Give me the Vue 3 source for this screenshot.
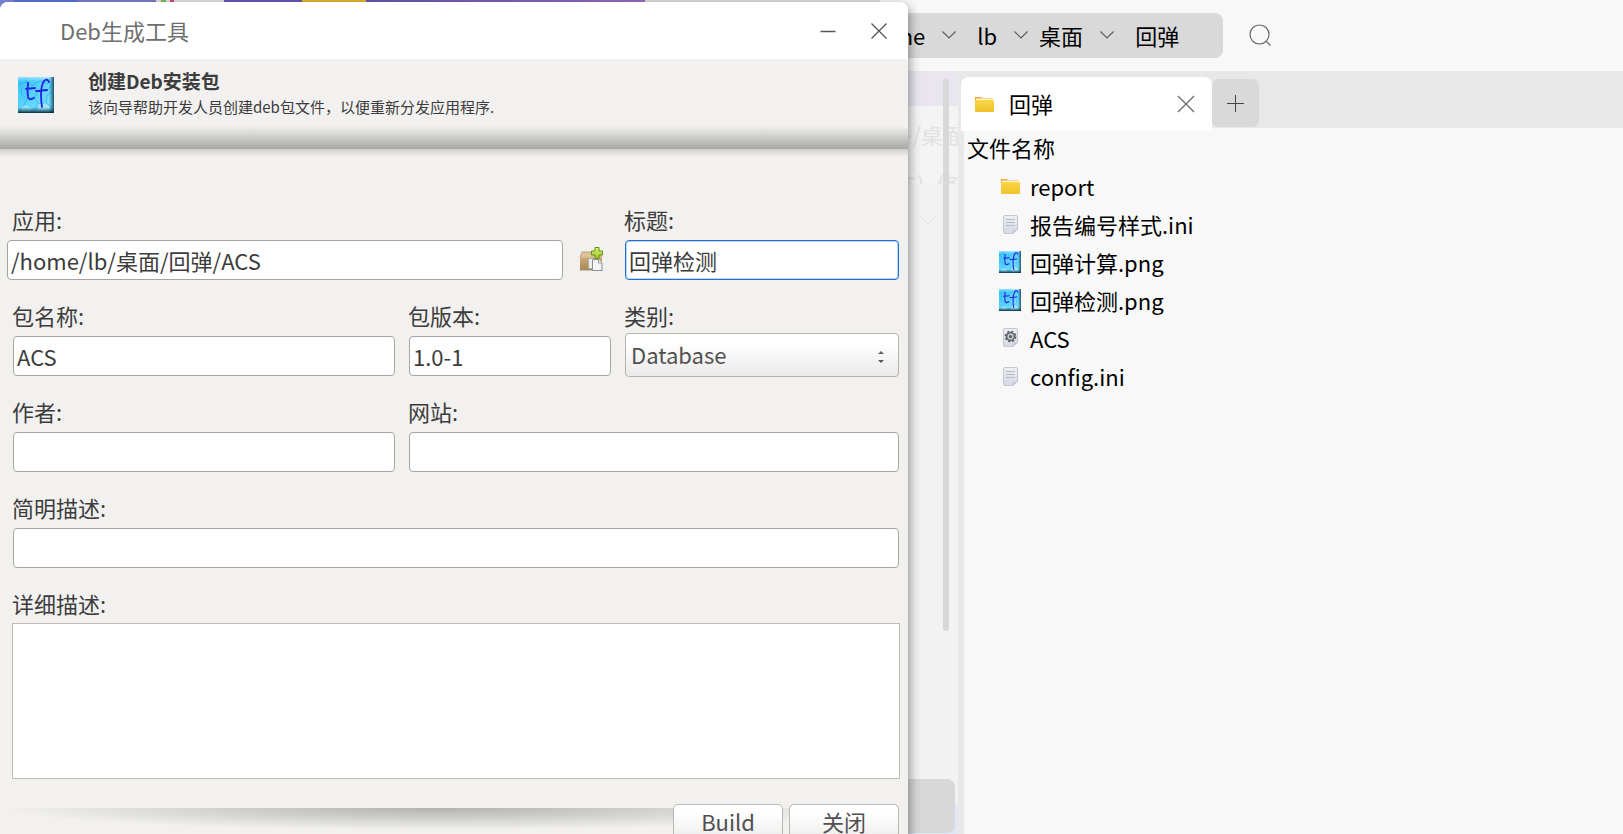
<script setup>
import { reactive } from 'vue'

const form = reactive({
  app: '/home/lb/桌面/回弹/ACS',
  title: '回弹检测',
  name: 'ACS',
  version: '1.0-1',
  category: 'Database',
  author: '',
  website: '',
  summary: '',
  description: ''
})

const categories = ['Database', 'Development', 'Education', 'Graphics', 'Network', 'Office', 'Utility']
const crumbs = [
  { name: 'home' },
  { name: 'lb', spaced: true },
  { name: '桌面' },
  { name: '回弹', spaced: true }
]
const files = [
  { name: 'report', icon: 'folder' },
  { name: '报告编号样式.ini', icon: 'doc' },
  { name: '回弹计算.png', icon: 'tf' },
  { name: '回弹检测.png', icon: 'tf' },
  { name: 'ACS', icon: 'exec' },
  { name: 'config.ini', icon: 'doc' }
]
</script>

<template>
  <svg class="defs" width="0" height="0" aria-hidden="true">
    <defs>
      <linearGradient id="g-folder" x1="0" y1="0" x2="0" y2="1">
        <stop offset="0" stop-color="#f9d648" /><stop offset="1" stop-color="#f0c22c" />
      </linearGradient>
      <linearGradient id="g-doc" x1="0" y1="0" x2="0" y2="1">
        <stop offset="0" stop-color="#eeeff3" /><stop offset="1" stop-color="#d6d9e4" />
      </linearGradient>
      <linearGradient id="g-tf" x1="0" y1="0" x2="1" y2="1">
        <stop offset="0" stop-color="#35c3fb" /><stop offset="0.5" stop-color="#5ed3fd" /><stop offset="1" stop-color="#8be4fb" />
      </linearGradient>
      <linearGradient id="g-edge-b" x1="0" y1="0" x2="0" y2="1">
        <stop offset="0.84" stop-color="#0a4a66" stop-opacity="0" /><stop offset="1" stop-color="#06202f" stop-opacity="0.95" />
      </linearGradient>
      <linearGradient id="g-edge-r" x1="0" y1="0" x2="1" y2="0">
        <stop offset="0.86" stop-color="#0a4a66" stop-opacity="0" /><stop offset="1" stop-color="#0a3c52" stop-opacity="0.85" />
      </linearGradient>
      <linearGradient id="g-edge-t" x1="0" y1="0" x2="0" y2="1">
        <stop offset="0" stop-color="#fff" stop-opacity="0.5" /><stop offset="0.12" stop-color="#fff" stop-opacity="0" />
      </linearGradient>
      <linearGradient id="g-box" x1="0" y1="0" x2="0" y2="1">
        <stop offset="0" stop-color="#cfae7f" /><stop offset="1" stop-color="#a98652" />
      </linearGradient>
      <linearGradient id="g-plus" x1="0" y1="0" x2="0" y2="1">
        <stop offset="0" stop-color="#e6f27c" /><stop offset="1" stop-color="#9cc31e" />
      </linearGradient>
      <symbol id="i-folder" viewBox="0 0 22 22">
        <path d="M2 4h6l1 1h11v5H2z" fill="#f2a52a" />
        <path d="M3 5.500h17V9H3z" fill="#fdf6dc" />
        <path d="M2 7.700q0-.7.8-.7h17.400q.8 0 .8.800v10.200q0 1-1 1H3q-1 0-1-1z" fill="url(#g-folder)" />
      </symbol>
      <symbol id="i-doc" viewBox="0 0 22 22">
        <path d="M6 2.500h11q1.500 0 1.500 1.500v12.500l-4.500 4H6q-1.500 0-1.500-1.500V4q0-1.500 1.500-1.500z" fill="url(#g-doc)" stroke="#c3c6ce" />
        <path d="M14 20.500v-2.500q0-1.500 1.500-1.500h3z" fill="#c5c8d3" />
        <path d="M7 6.500h9M7 9.500h9M7 12.500h9" stroke="#b6bac6" />
      </symbol>
      <symbol id="i-exec" viewBox="0 0 22 22">
        <path d="M6 1.500h11q1.500 0 1.500 1.500v12.500l-4.500 4H6q-1.500 0-1.500-1.500V3q0-1.500 1.500-1.500z" fill="url(#g-doc)" stroke="#c3c6ce" />
        <path d="M14 19.500v-2.500q0-1.500 1.500-1.500h3z" fill="#c5c8d3" />
        <circle cx="11.500" cy="9.500" r="5" fill="none" stroke="#5b5d61" stroke-width="1.600" stroke-dasharray="2.200 1.727" />
        <circle cx="11.500" cy="9.500" r="3.900" fill="#c4c6cb" stroke="#5b5d61" stroke-width="1.400" />
        <circle cx="11.500" cy="9.500" r="1.500" fill="#55575b" />
      </symbol>
      <symbol id="i-tf" viewBox="0 0 36 36">
        <path d="M0 0h36v36H0z" fill="url(#g-tf)" />
        <path d="M0 8l8-3 6 4 8-5 8 3M8 5V0M4 8l-1 9 6 5 8-2 3 7 8-1 6 4M9 22l-4 8 5 5M17 20l3-7 9 1 4-5M20 27l-5 8M28 26l1-8 5-3" fill="none" stroke="#1ba5e6" stroke-opacity="0.550" />
        <path d="M20 27l8-1 4 4-3 4h-8zM3 30l5-2 6 4-3 3H4z" fill="#b5efff" fill-opacity="0.600" />
        <path d="M0 0h36v36H0z" fill="url(#g-edge-t)" />
        <path d="M0 0h36v36H0z" fill="url(#g-edge-r)" />
        <path d="M0 0h36v36H0z" fill="url(#g-edge-b)" />
        <path d="M10 6q-1 8 0 14 1 4 6 1M8 12l9-1M31 5q-2-4-5-1-3 5-3 13 0 7 1 13M18 14l11-1" fill="none" stroke="#2222e0" stroke-width="1.800" stroke-linecap="round" />
      </symbol>
    </defs>
  </svg>

  <div class="desktop">
    <div class="left">
      <form class="dialog" @submit.prevent>
        <header class="titlebar">
          <h1>Deb生成工具</h1>
          <button type="button" aria-label="Minimize">
            <svg width="18" height="18" viewBox="0 0 18 18"><path d="M1.500 9.500h15" stroke="#555" stroke-width="1.300" /></svg>
          </button>
          <button type="button" aria-label="Close">
            <svg width="18" height="18" viewBox="0 0 18 18"><path d="M1.500 1.500l15 15M16.500 1.500l-15 15" stroke="#555" stroke-width="1.300" /></svg>
          </button>
        </header>

        <section class="banner">
          <svg class="logo" width="36" height="36"><use href="#i-tf" /></svg>
          <div>
            <h2>创建Deb安装包</h2>
            <p>该向导帮助开发人员创建deb包文件，以便重新分发应用程序.</p>
          </div>
        </section>

        <section class="fields">
          <div class="field span2">
            <label for="app">应用:</label>
            <div class="picker">
              <input id="app" v-model="form.app" type="text" />
              <button type="button" aria-label="Browse">
                <svg width="24" height="24" viewBox="0 0 24 24">
                  <path d="M0 23.500h24" stroke="#000" stroke-opacity="0.180" />
                  <path d="M3 5h17l3 5H1z" fill="#dcc39b" stroke="#b7986a" stroke-width="0.800" />
                  <path d="M1 9h22v14H1z" fill="url(#g-box)" />
                  <path d="M2 10h20" stroke="#e1caa6" />
                  <path d="M9.500 11.500h6v10h-6z" fill="#eee" stroke="#aaa" />
                  <path d="M13.500 12.500h6l3.500 3.500v7.500h-9.500z" fill="#f4f4f4" stroke="#8f8f8f" />
                  <path d="M19.500 12.500V16H23" fill="#fff" stroke="#9a9a9a" />
                  <path d="M16 0.500h4v3.500h3.500v4H20v3.500h-4V8h-3.500V4H16z" fill="url(#g-plus)" stroke="#5f9215" />
                </svg>
              </button>
            </div>
          </div>
          <div class="field">
            <label for="title">标题:</label>
            <input id="title" v-model="form.title" class="active" type="text" />
          </div>

          <div class="field">
            <label for="name">包名称:</label>
            <input id="name" v-model="form.name" type="text" />
          </div>
          <div class="field">
            <label for="version">包版本:</label>
            <input id="version" v-model="form.version" type="text" />
          </div>
          <div class="field">
            <label for="category">类别:</label>
            <div class="combo">
              <select id="category" v-model="form.category">
                <option v-for="c in categories" :key="c">{{ c }}</option>
              </select>
              <svg width="8" height="14" viewBox="0 0 8 14" aria-hidden="true"><path d="M1 4l3-3 3 3zM1 10l3 3 3-3z" fill="#5c5c5c" /></svg>
            </div>
          </div>

          <div class="field">
            <label for="author">作者:</label>
            <input id="author" v-model="form.author" type="text" />
          </div>
          <div class="field span2">
            <label for="website">网站:</label>
            <input id="website" v-model="form.website" type="text" />
          </div>

          <div class="field span3">
            <label for="summary">简明描述:</label>
            <input id="summary" v-model="form.summary" type="text" />
          </div>

          <div class="field span3">
            <label for="description">详细描述:</label>
            <textarea id="description" v-model="form.description"></textarea>
          </div>
        </section>

        <footer class="actions">
          <button type="submit">Build</button>
          <button type="button">关闭</button>
        </footer>
      </form>
    </div>

    <div class="manager">
      <div class="toolbar">
        <nav class="crumbs" aria-label="Path">
          <template v-for="(c, i) in crumbs" :key="c.name">
            <svg v-if="i" width="14" height="8" viewBox="0 0 14 8" aria-hidden="true"><path d="M0.500 0.500l6.500 6.500 6.500-6.500" fill="none" stroke="#5c5c5c" stroke-width="1.200" /></svg>
            <a href="#" :class="{ spaced: c.spaced }">{{ c.name }}</a>
          </template>
        </nav>
        <button type="button" class="search" aria-label="Search">
          <svg width="22" height="22" viewBox="0 0 22 22"><circle cx="10.500" cy="10.500" r="9.500" fill="none" stroke="#6a6a6a" stroke-width="1.200" /><path d="M17.500 17.500l4 4" stroke="#6a6a6a" stroke-width="1.200" /></svg>
        </button>
      </div>

      <div class="body">
        <aside class="side">
          <div class="ghost tint"></div>
          <div class="ghost path">~/桌面</div>
          <div class="ghost cut"><span>S)</span><span>修</span></div>
          <svg class="ghost-chevron" width="14" height="8" viewBox="0 0 14 8" aria-hidden="true"><path d="M0.500 0.500l6.500 6.500 6.500-6.500" fill="none" stroke="#e0e0e0" /></svg>
          <div class="panel"></div>
          <div class="scroll"></div>
        </aside>

        <main class="content">
          <div class="tabs">
            <div class="tab">
              <svg width="22" height="22"><use href="#i-folder" /></svg>
              <span>回弹</span>
              <button type="button" aria-label="Close tab">
                <svg width="18" height="18" viewBox="0 0 18 18"><path d="M1 1l16 16M17 1L1 17" stroke="#666" stroke-width="1.200" /></svg>
              </button>
            </div>
            <button type="button" class="add" aria-label="New tab">
              <svg width="17" height="17" viewBox="0 0 17 17"><path d="M0 8.500h17M8.500 0v17" stroke="#444" /></svg>
            </button>
          </div>
          <div class="listing">
            <h3>文件名称</h3>
            <ul>
              <li v-for="f in files" :key="f.name">
                <svg width="22" height="22"><use :href="'#i-' + f.icon" /></svg>
                <span>{{ f.name }}</span>
              </li>
            </ul>
          </div>
        </main>
      </div>
    </div>
  </div>
</template>

<style>
body {
  margin: 0;
  overflow: hidden;
}
</style>

<style scoped>
.defs {
  position: absolute;
}
.desktop {
  display: flex;
  height: 100vh;
  overflow: hidden;
  background: #f8f8f8;
  font-family: "Noto Sans CJK SC", "Noto Sans", sans-serif;
  font-size: 22px;
}
.desktop * {
  box-sizing: border-box;
}
button,
input,
select,
textarea {
  margin: 0;
  font: inherit;
  color: inherit;
}
h1,
h2,
h3,
p,
ul {
  margin: 0;
  padding: 0;
}
button {
  display: flex;
  align-items: center;
  justify-content: center;
  padding: 0;
  border: 0;
  background: none;
}
svg {
  display: block;
  flex: none;
}

/* package builder window */
.left {
  flex: 908 1 0;
  min-width: 0;
  position: relative;
  z-index: 1;
  padding-top: 2px;
  background: linear-gradient(90deg, #7b86dc 0 14px, #5573dc 14px 77px, #7c7cd0 77px 156px, #e6e6e6 156px 161px, #7fbf50 161px 166px, #e6e6e6 166px 170px, #d04a80 170px 174px, #e6e6e6 174px 224px, #6659bd 224px 302px, #e6b730 302px 366px, #6657b4 366px, #9a6cc2 645px, #e0e0e0 645px 880px, #f8f8f8 880px) top / 100% 12px no-repeat;
}
.dialog {
  border-radius: 8px 8px 0 0;
  overflow: hidden;
  background: #f2f1f0;
  color: #3c3c3c;
  box-shadow: 1px 4px 12px rgba(0, 0, 0, 0.45);
}
.titlebar {
  display: flex;
  align-items: center;
  height: 57px;
  padding: 0 20px 0 60px;
  gap: 33px;
  background: #fff;
}
.titlebar h1 {
  flex: 1;
  padding-bottom: 2px;
  font-size: 22px;
  font-weight: 400;
  line-height: 32px;
  color: #6e6e6e;
}
.banner {
  display: flex;
  height: 90px;
  padding: 9px 18px;
  gap: 34px;
  background: linear-gradient(#a6a6a400, #a6a6a4) bottom / 100% 23px no-repeat;
}
.logo {
  margin-top: 9px;
}
.banner h2 {
  font-size: 19px;
  line-height: 26px;
  font-weight: 700;
}
.banner p {
  font-size: 15px;
  line-height: 26px;
}
.fields {
  display: grid;
  grid-template-columns: 382fr 202fr 274fr;
  gap: 20px 14px;
  padding: 56px 9px 0 13px;
  background: linear-gradient(#cfcecd, #f2f1f0) top / 100% 8px no-repeat;
}
.field {
  display: flex;
  flex-direction: column;
  min-width: 0;
}
.span2 {
  grid-column: span 2;
}
.span3 {
  grid-column: span 3;
}
label {
  margin: 0 0 4px -1px;
  line-height: 28px;
}
input {
  width: 100%;
  min-width: 0;
  height: 40px;
  margin: 3px 0 1px;
  padding: 0 3px;
  border: 1px solid #a5a5a0;
  border-radius: 4px;
  outline: 0;
  background: #fff;
}
input.active {
  border-color: #1f6fd0;
  box-shadow: inset 0 0 0 1px #b9d5f5;
}
.picker {
  display: flex;
  align-items: center;
  gap: 16px;
  margin-left: -6px;
  padding-right: 8px;
}
.combo {
  display: grid;
  align-items: center;
}
.combo > * {
  grid-area: 1 / 1;
}
.combo svg {
  justify-self: end;
  margin: 4px 14px 0 0;
  pointer-events: none;
}
select {
  width: 100%;
  height: 44px;
  padding: 0 5px 2px;
  appearance: none;
  border: 1px solid #b4b3ae;
  border-radius: 4px;
  outline: 0;
  background: linear-gradient(#fff 20%, #ebeae9);
  color: #505050;
}
textarea {
  height: 156px;
  margin: 2px -1px 0;
  padding: 4px;
  border: 1px solid #bdbcb5;
  border-radius: 0;
  outline: 0;
  resize: none;
  background: #fff;
}
.actions {
  display: flex;
  justify-content: flex-end;
  gap: 6px;
  margin-top: 25px;
  padding: 0 9px 10px 0;
  background: radial-gradient(50% 100% at 50% 0, #b2b2af, #f2f1f0) 0 4px / 96% 22px no-repeat;
}
.actions button {
  width: 110px;
  height: 40px;
  padding-bottom: 6px;
  border: 1px solid #b9b8b3;
  border-radius: 5px;
  background: linear-gradient(#fff 20%, #f0efee 80%, #e6e5e4);
  color: #505050;
}

/* file manager */
.manager {
  flex: 715 1 0;
  min-width: 0;
  display: flex;
  flex-direction: column;
  color: #000;
}
.toolbar {
  display: flex;
  align-items: center;
  gap: 26px;
  height: 71px;
  padding-bottom: 1px;
}
.crumbs {
  display: flex;
  align-items: center;
  height: 45px;
  margin-left: -42px;
  padding: 0 44px 0 0;
  border-radius: 0 8px 8px 0;
  background: #d9d9d9;
}
.crumbs a {
  padding-bottom: 1px;
  color: inherit;
  text-decoration: none;
}
.crumbs .spaced {
  padding-left: 10px;
}
.crumbs svg {
  margin: 0 11px 0 17px;
}
.body {
  flex: 1;
  display: flex;
  min-height: 0;
}
.side {
  position: relative;
  flex: none;
  display: flex;
  flex-direction: column;
  width: 50px;
  overflow: hidden;
  background: linear-gradient(#dfe7f5, #dfe7f5) bottom / 100% 30px no-repeat #f2f2f2;
}
.ghost {
  flex: none;
  overflow: hidden;
  white-space: nowrap;
  color: #e2e2e2;
  background: #f4f4f4;
}
.tint {
  height: 35px;
  background: #e9e6ef;
}
.path {
  height: 60px;
  line-height: 56px;
  text-indent: -8px;
}
.cut {
  display: flex;
  gap: 16px;
  height: 18px;
  line-height: 34px;
  text-indent: -4px;
}
.ghost-chevron {
  margin: 33px 0 0 13px;
}
.panel {
  height: 54px;
  margin: auto 3px 1px 0;
  border-radius: 0 8px 8px 0;
  background: #d8d8d8;
}
.scroll {
  position: absolute;
  top: 8px;
  right: 9px;
  width: 6px;
  height: 552px;
  border-radius: 3px;
  background: #d8d8d8;
}
.content {
  flex: 1;
  min-width: 0;
  display: flex;
  flex-direction: column;
  background: #e8e8e8;
}
.tabs {
  display: flex;
  align-items: flex-start;
  height: 57px;
  padding: 6px 0 0 3px;
}
.tab {
  position: relative;
  display: flex;
  align-items: center;
  gap: 14px;
  width: 251px;
  height: 54px;
  padding: 0 17px 0 12px;
  border-radius: 8px 8px 0 0;
  background: #fff;
}
.tab span {
  flex: 1;
  padding-bottom: 2px;
}
.add {
  width: 47px;
  height: 48px;
  margin-top: 2px;
  border-radius: 6px;
  background: #d9d9d9;
}
.listing {
  flex: 1;
  margin-left: 6px;
  padding: 5px 3px;
  background: #f8f8f8;
}
h3 {
  font-size: 22px;
  font-weight: 400;
  line-height: 28px;
}
ul {
  list-style: none;
  padding: 6px 0 0 32px;
}
li {
  display: flex;
  align-items: center;
  gap: 9px;
  height: 38px;
}
</style>
